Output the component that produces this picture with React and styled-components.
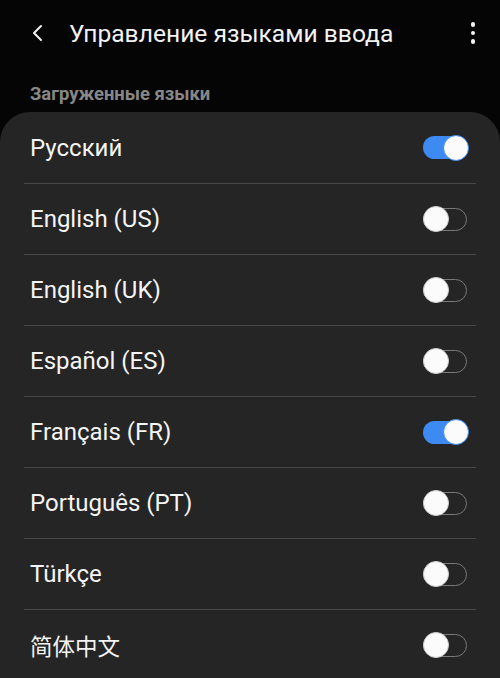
import React from "react";
import styled, { createGlobalStyle } from "styled-components";

const Global = createGlobalStyle`
  html, body { margin: 0; padding: 0; background: #050505; }
  body { font-family: Roboto, "Noto Sans", "Noto Sans CJK SC", sans-serif; }
`;

const Page = styled.div`
  width: 500px;
  height: 678px;
  overflow: hidden;
  background: #050505;
  display: flex;
  flex-direction: column;
`;

const Toolbar = styled.div`
  height: 66px;
  flex-shrink: 0;
  display: flex;
  align-items: center;
  padding: 0 22px 0 26px;
  color: #f2f2f2;
`;

const BackBtn = styled.div`
  width: 24px;
  height: 24px;
  display: flex;
  align-items: center;
  justify-content: center;
  margin-right: 19px;
`;

const Title = styled.div`
  flex: 1;
  font-size: 24.6px;
`;

const MoreBtn = styled.div`
  width: 10px;
  display: flex;
  flex-direction: column;
  align-items: center;
  gap: 4px;
  & > span {
    width: 4.5px;
    height: 4.5px;
    border-radius: 50%;
    background: #f2f2f2;
  }
`;

const SectionLabel = styled.div`
  flex-shrink: 0;
  box-sizing: border-box;
  padding: 17px 30px 0;
  height: 46px;
  font-size: 18.4px;
  line-height: 21px;
  font-weight: 700;
  color: #878787;
`;

const Card = styled.div`
  flex: 1;
  background: #252525;
  border-radius: 30px 30px 0 0;
  display: flex;
  flex-direction: column;
`;

const Row = styled.div`
  height: 71px;
  flex-shrink: 0;
  display: flex;
  align-items: center;
  justify-content: space-between;
  border-top: ${(p) => (p.$first ? "none" : "1px solid #474747")};
  margin: 0 24px;
  padding: 0 9px 0 6px;
  box-sizing: border-box;
`;

const Label = styled.div`
  font-size: ${(p) => (p.$cjk ? "22.5px" : "24px")};
  color: #f4f4f4;
  font-family: Roboto, "Noto Sans CJK SC", sans-serif;
`;

const Track = styled.div`
  width: 44px;
  height: 23px;
  border-radius: 12px;
  box-sizing: border-box;
  position: relative;
  background: ${(p) => (p.$on ? "#3d8bf2" : "transparent")};
  border: ${(p) => (p.$on ? "none" : "1.5px solid #7a7a7a")};
`;

const Thumb = styled.div`
  position: absolute;
  top: 50%;
  width: 26px;
  height: 26px;
  border-radius: 50%;
  background: #fbfbfb;
  transform: translateY(-50%);
  box-sizing: border-box;
  border: 1px solid ${(p) => (p.$on ? "#3d8bf2" : "#cfcfcf")};
  ${(p) => (p.$on ? "right: -2px;" : "left: -1px;")}
`;

const Toggle = ({ on }) => (
  <Track $on={on}>
    <Thumb $on={on} />
  </Track>
);

const langs = [
  ["Русский", true],
  ["English (US)", false],
  ["English (UK)", false],
  ["Español (ES)", false],
  ["Français (FR)", true],
  ["Português (PT)", false],
  ["Türkçe", false],
  ["简体中文", false, true],
];

export default function App() {
  return (
    <Page>
      <Global />
      <Toolbar>
        <BackBtn>
          <svg width="14" height="18" viewBox="0 0 14 18">
            <path d="M10 2 L3 9 L10 16" fill="none" stroke="#f2f2f2" strokeWidth="2" strokeLinecap="round" strokeLinejoin="round" />
          </svg>
        </BackBtn>
        <Title>Управление языками ввода</Title>
        <MoreBtn>
          <span />
          <span />
          <span />
        </MoreBtn>
      </Toolbar>
      <SectionLabel>Загруженные языки</SectionLabel>
      <Card>
        {langs.map(([name, on, cjk], i) => (
          <Row key={name} $first={i === 0}>
            <Label $cjk={cjk}>{name}</Label>
            <Toggle on={on} />
          </Row>
        ))}
      </Card>
    </Page>
  );
}
